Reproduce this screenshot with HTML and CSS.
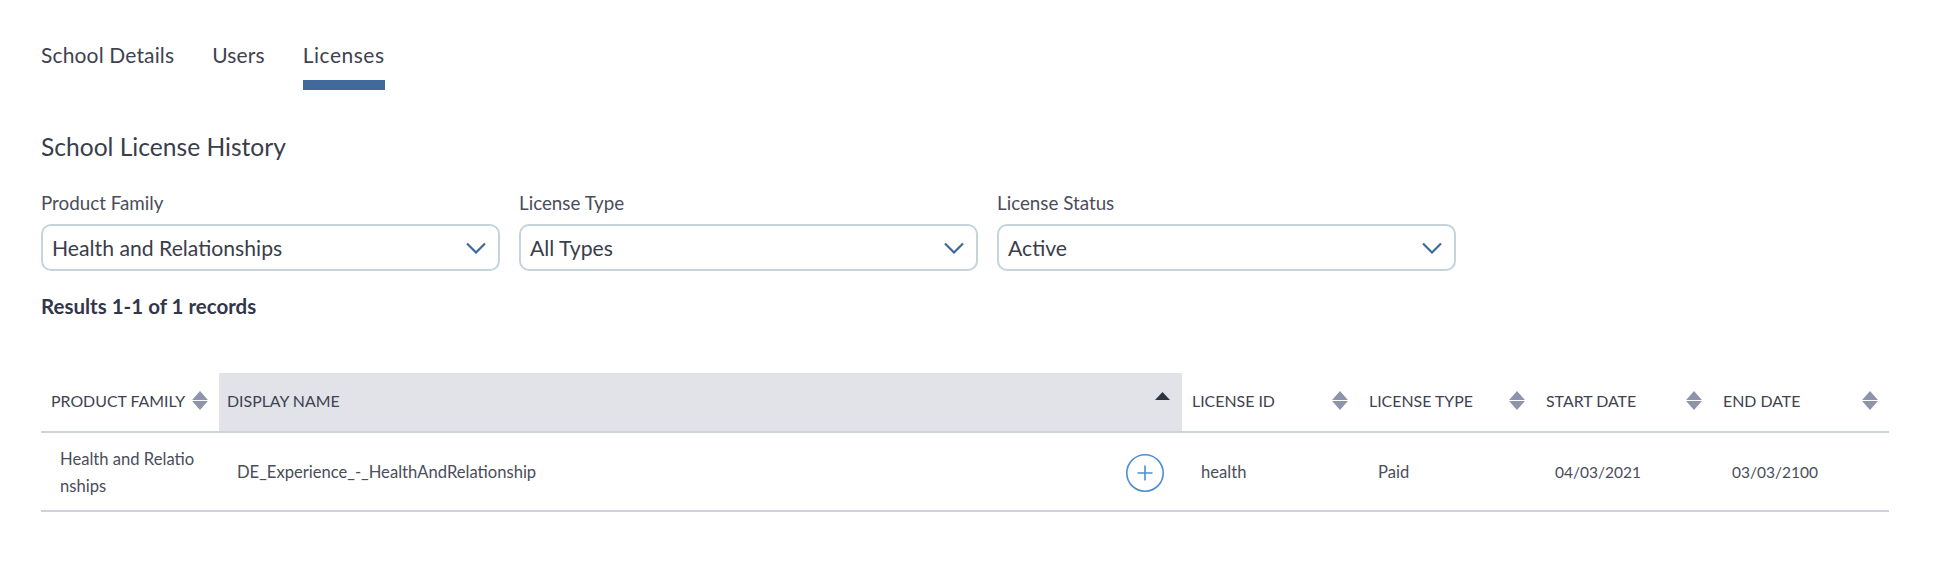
FILE: index.html
```html
<!DOCTYPE html>
<html lang="en">
<head>
<meta charset="utf-8">
<title>School License History</title>
<link rel="stylesheet" href="styles.css">
</head>
<body>
<main class="page">
  <nav class="tabs">
    <a class="tab">School Details</a>
    <a class="tab">Users</a>
    <a class="tab tab-active">Licenses</a>
  </nav>
  <h1 class="title">School License History</h1>
  <section class="filters">
    <div class="filter">
      <label class="filter-label">Product Family</label>
      <div class="select"><span>Health and Relationships</span><svg class="chev" viewBox="0 0 20 12"><path d="M1 1.5l9 9 9-9"/></svg></div>
    </div>
    <div class="filter">
      <label class="filter-label">License Type</label>
      <div class="select"><span>All Types</span><svg class="chev" viewBox="0 0 20 12"><path d="M1 1.5l9 9 9-9"/></svg></div>
    </div>
    <div class="filter">
      <label class="filter-label">License Status</label>
      <div class="select"><span>Active</span><svg class="chev" viewBox="0 0 20 12"><path d="M1 1.5l9 9 9-9"/></svg></div>
    </div>
  </section>
  <p class="results">Results 1-1 of 1 records</p>
  <table class="grid">
    <colgroup>
      <col class="col-family"><col class="col-name"><col class="col"><col class="col"><col class="col"><col class="col-last">
    </colgroup>
    <thead>
      <tr>
        <th><div class="th"><span>PRODUCT FAMILY</span><svg class="sort" viewBox="0 0 15 18"><path d="M7.5 0L15 8.500H0zM0 9.500h15L7.500 18z"/></svg></div></th>
        <th class="th-active"><div class="th"><span>DISPLAY NAME</span><svg class="sort-up" viewBox="0 0 15 8"><path d="M7.500 0L15 8H0z"/></svg></div></th>
        <th><div class="th"><span>LICENSE ID</span><svg class="sort" viewBox="0 0 15 18"><path d="M7.5 0L15 8.500H0zM0 9.500h15L7.500 18z"/></svg></div></th>
        <th><div class="th"><span>LICENSE TYPE</span><svg class="sort" viewBox="0 0 15 18"><path d="M7.5 0L15 8.500H0zM0 9.500h15L7.500 18z"/></svg></div></th>
        <th><div class="th"><span>START DATE</span><svg class="sort" viewBox="0 0 15 18"><path d="M7.5 0L15 8.500H0zM0 9.500h15L7.500 18z"/></svg></div></th>
        <th><div class="th"><span>END DATE</span><svg class="sort" viewBox="0 0 15 18"><path d="M7.5 0L15 8.500H0zM0 9.500h15L7.500 18z"/></svg></div></th>
      </tr>
    </thead>
    <tbody>
      <tr>
        <td class="td-wrap">Health and Relationships</td>
        <td class="td-name"><div class="name-cell"><span>DE_Experience_-_HealthAndRelationship</span><svg class="plus" viewBox="0 0 38 38"><circle cx="19" cy="19" r="18.200"/><path d="M19 11.500v15M11.500 19h15"/></svg></div></td>
        <td>health</td>
        <td>Paid</td>
        <td class="td-date">04/03/2021</td>
        <td class="td-date">03/03/2100</td>
      </tr>
    </tbody>
  </table>
</main>
</body>
</html>
```
FILE: styles.css
```css
* { box-sizing: border-box; }
html, body { margin: 0; background: #fff; }
body { font-family: "Lato", "Liberation Sans", sans-serif; color: #3a3d4b; }
.page { padding: 32px 71px 0 41px; }

.tabs { display: flex; gap: 38px; height: 58px; }
.tab { font-size: 21px; letter-spacing: 0.15px; line-height: 46px; height: 58px; white-space: nowrap; color: #3f4250; }
.tab-active { border-bottom: 10px solid #3f6a9b; letter-spacing: 0.5px; }

.title { margin: 42px 0 0; font-size: 24.600px; font-weight: 400; line-height: 30px; color: #3a3d4b; }

.filters { display: flex; gap: 20px; margin-top: 29px; }
.filter { width: 459px; }
.filter + .filter { margin-left: -1px; }
.filter-label { display: block; font-size: 18.800px; line-height: 24px; color: #4a4d5a; }
.select { display: flex; align-items: center; justify-content: space-between; height: 47px; margin-top: 9px; padding: 0 12px 0 9px; border: 2px solid #c5d3db; border-radius: 10px; font-size: 21.200px; color: #3a3d4b; }
.chev { width: 20px; height: 12px; fill: none; stroke: #3f6a9b; stroke-width: 2.200; }

.results { margin: 22px 0 0; font-size: 20.500px; font-weight: 700; line-height: 26px; color: #33364a; }

.grid { width: 1848px; margin-top: 54px; border-collapse: collapse; table-layout: fixed; }
.col-family { width: 178px; }
.col-name { width: 963px; }
.col { width: 177px; }
.col-last { width: 176px; }
.grid th { height: 59px; padding: 0 10px 3px; border-bottom: 2px solid #cdd2de; font-size: 15.900px; font-weight: 400; text-align: left; color: #3f4250; }
.grid .th-active { background: #e1e3e9; padding-left: 8px; }
.th { display: flex; align-items: center; justify-content: space-between; white-space: nowrap; }
.sort { width: 16px; height: 19px; fill: #8e94ab; flex: none; margin-right: 1px; }
.sort-up { width: 15px; height: 8px; fill: #2f3342; flex: none; margin: -10px 2px 0 0; }
.grid td { height: 79px; padding: 2px 17px 0 19px; border-bottom: 2px solid #cdd2de; font-size: 16.600px; line-height: 27px; color: #4a4d5a; }
.grid .td-date { font-size: 15.500px; }
.grid .td-name { padding: 2px 18px 0 18px; }
.td-wrap { word-break: break-all; }
.name-cell { display: flex; align-items: center; justify-content: space-between; }
.plus { width: 38px; height: 38px; flex: none; fill: none; stroke: #4a8ed6; stroke-width: 1.600; }
```
